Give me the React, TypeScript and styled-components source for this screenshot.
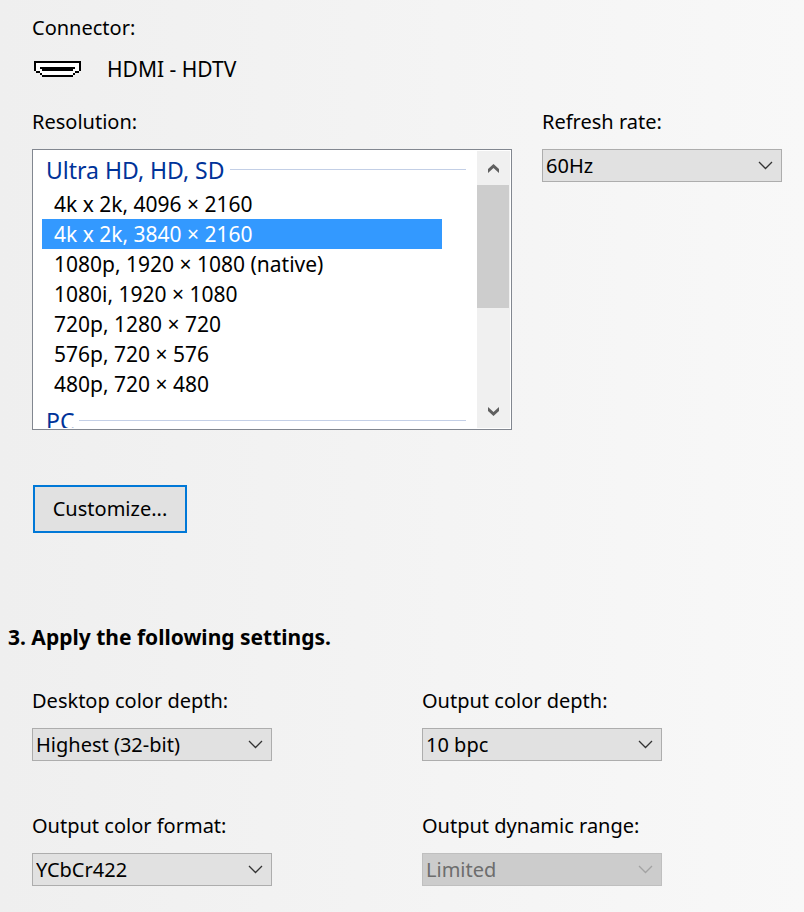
import React, { useState } from "react";
import styled, { createGlobalStyle } from "styled-components";

const GlobalStyle = createGlobalStyle`
  * { box-sizing: border-box; }
  body {
    margin: 0;
    min-height: 100vh;
    background: linear-gradient(to right, #efefef, #f8f8f8);
    color: #000;
    font: 20px/26px "Noto Sans", "Open Sans", sans-serif;
  }
`;

const Page = styled.main`
  padding: 15px 8px 24px;
`;

const Section = styled.section`
  padding: 0 14px 0 24px;
`;

const Connector = styled.div`
  display: flex;
  align-items: center;
  gap: 26px;
  margin: 15px 0 27px;
  font-size: 21px;
`;

const ModeRow = styled.div`
  display: grid;
  grid-template-columns: 2fr 1fr;
  gap: 30px;
  align-items: start;
`;

const Field = styled.div`
  display: flex;
  flex-direction: column;
  gap: 14px;
`;

const SelectFrame = styled.div`
  display: grid;
  align-items: center;
  > * { grid-area: 1 / 1; }
  > svg {
    justify-self: end;
    margin-right: 9px;
    pointer-events: none;
  }
`;

const Select = styled.select`
  appearance: none;
  width: 100%;
  height: 33px;
  padding: 0 30px 0 3px;
  border: 1px solid #adadad;
  border-radius: 0;
  background: #e1e1e1;
  color: #000;
  font: inherit;
  &:disabled {
    border-color: #bfbfbf;
    background: #cccccc;
    color: #6d6d6d;
    opacity: 1;
  }
`;

const ListFrame = styled.div`
  display: grid;
  grid-template-columns: 1fr 33px;
  height: 281px;
  padding: 1px;
  border: 1px solid #828790;
  background: #fff;
`;

const ListBody = styled.div`
  overflow: hidden;
  padding: 1px 11px 0 8px;
`;

const GroupTitle = styled.div`
  display: flex;
  align-items: center;
  gap: 5px;
  padding-left: 4px;
  height: 35px;
  color: #003399;
  font-size: 23px;
  &::after {
    content: "";
    flex: 1;
    height: 1px;
    background: #c3cfe6;
  }
`;

const Options = styled.ul`
  list-style: none;
  margin: 2px 24px 4px 0;
  padding: 0;
  font-size: 21px;
`;

const Option = styled.li<{ $selected: boolean }>`
  height: 30px;
  padding-left: 12px;
  line-height: 30px;
  color: ${(p) => (p.$selected ? "#fff" : "#000")};
  background: ${(p) => (p.$selected ? "#3399ff" : "transparent")};
  cursor: default;
`;

const ScrollBar = styled.div`
  display: grid;
  grid-template-rows: 34px 1fr 34px;
  background: #f0f0f0;
`;

const ScrollButton = styled.button`
  display: grid;
  place-items: center;
  padding: 0;
  border: 0;
  background: #f0f0f0;
`;

const Thumb = styled.div`
  height: 123px;
  margin-right: 1px;
  background: #cdcdcd;
`;

const PushButton = styled.button`
  width: 154px;
  height: 48px;
  margin: 55px 1px 91px;
  border: 2px solid #0078d7;
  background: #e1e1e1;
  color: #000;
  font: inherit;
`;

const Heading = styled.h2`
  margin: 0 0 38px;
  font-size: 21px;
  line-height: 26px;
`;

const SettingsGrid = styled.div`
  display: grid;
  grid-template-columns: minmax(0, 240px) minmax(0, 240px);
  gap: 52px 150px;
`;

function ConnectorIcon() {
  return (
    <svg width="49" height="18" viewBox="0 0 49 18" shapeRendering="crispEdges" aria-hidden="true">
      <path d="M4 3H47V11H43V13H41V15H10V13H8V11H4Z" fill="#fff" />
      <path
        d="M2 1H49V11H47V13H43V15H41V17H10V15H8V13H4V11H2Z M4 3V11H8V13H10V15H41V13H43V11H47V3Z"
        fill="#000"
        fillRule="evenodd"
      />
      <path d="M8 7H43V9H41V11H10V9H8Z" fill="#000" />
    </svg>
  );
}

function Chevron({ color = "#333" }: { color?: string }) {
  return (
    <svg width="15" height="9" viewBox="0 0 15 9" fill="none" stroke={color} strokeWidth="1.3" aria-hidden="true">
      <path d="M1 1L7.5 7.5L14 1" />
    </svg>
  );
}

function ScrollArrow({ down = false }: { down?: boolean }) {
  return (
    <svg width="11" height="9" viewBox="0 0 11 9" fill="#606060" aria-hidden="true">
      <path d={down ? "M0 0L5.5 5L11 0V4L5.5 9L0 4Z" : "M0 9L5.5 4L11 9V5L5.5 0L0 5Z"} />
    </svg>
  );
}

type DropDownProps = { id: string; label: string; options: string[]; disabled?: boolean };

function DropDown({ id, label, options, disabled = false }: DropDownProps) {
  return (
    <Field>
      <label htmlFor={id}>{label}</label>
      <SelectFrame>
        <Select id={id} disabled={disabled}>
          {options.map((o) => (
            <option key={o}>{o}</option>
          ))}
        </Select>
        <Chevron color={disabled ? "#a3a3a3" : "#333"} />
      </SelectFrame>
    </Field>
  );
}

const modes = [
  "4k x 2k, 4096 × 2160",
  "4k x 2k, 3840 × 2160",
  "1080p, 1920 × 1080 (native)",
  "1080i, 1920 × 1080",
  "720p, 1280 × 720",
  "576p, 720 × 576",
  "480p, 720 × 480",
];

export default function App() {
  const [mode, setMode] = useState(modes[1]);
  return (
    <Page>
      <GlobalStyle />
      <Section>
        <div>Connector:</div>
        <Connector>
          <ConnectorIcon />
          <span>HDMI - HDTV</span>
        </Connector>
        <ModeRow>
          <Field>
            <span id="resolution-label">Resolution:</span>
            <ListFrame>
              <ListBody>
                <GroupTitle>Ultra HD, HD, SD</GroupTitle>
                <Options role="listbox" aria-labelledby="resolution-label" tabIndex={-1}>
                  {modes.map((m) => (
                    <Option key={m} role="option" aria-selected={m === mode} $selected={m === mode} onClick={() => setMode(m)}>
                      {m}
                    </Option>
                  ))}
                </Options>
                <GroupTitle>PC</GroupTitle>
              </ListBody>
              <ScrollBar>
                <ScrollButton type="button" aria-label="Scroll up"><ScrollArrow /></ScrollButton>
                <Thumb />
                <ScrollButton type="button" aria-label="Scroll down"><ScrollArrow down /></ScrollButton>
              </ScrollBar>
            </ListFrame>
          </Field>
          <DropDown id="refresh-rate" label="Refresh rate:" options={["60Hz"]} />
        </ModeRow>
        <PushButton type="button">Customize...</PushButton>
      </Section>
      <Heading>3. Apply the following settings.</Heading>
      <Section>
        <SettingsGrid>
          <DropDown id="desktop-depth" label="Desktop color depth:" options={["Highest (32-bit)"]} />
          <DropDown id="output-depth" label="Output color depth:" options={["10 bpc"]} />
          <DropDown id="output-format" label="Output color format:" options={["YCbCr422"]} />
          <DropDown id="dynamic-range" label="Output dynamic range:" options={["Limited"]} disabled />
        </SettingsGrid>
      </Section>
    </Page>
  );
}
